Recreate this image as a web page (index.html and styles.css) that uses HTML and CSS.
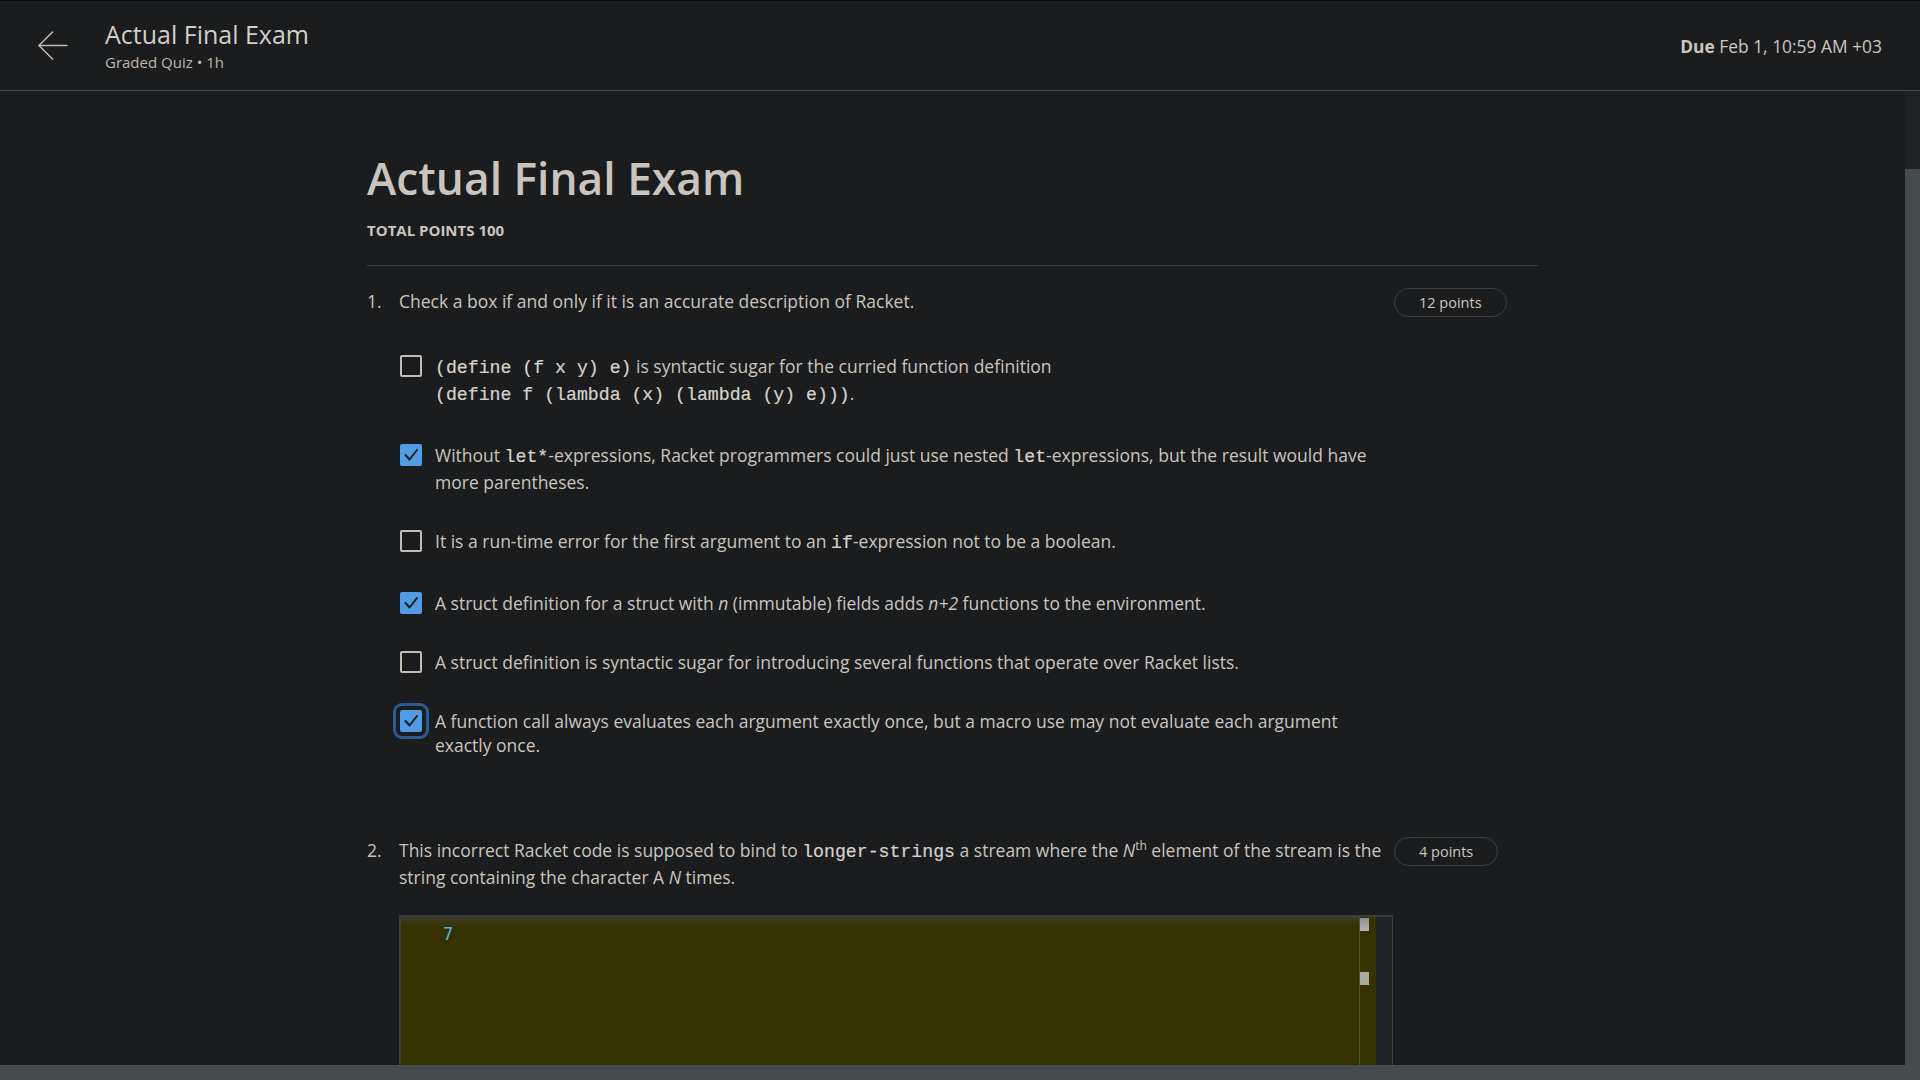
FILE: index.html
```html
<!DOCTYPE html>
<html lang="en">
<head>
<meta charset="utf-8">
<title>Actual Final Exam</title>
<link rel="stylesheet" href="styles.css">
</head>
<body>
<div class="app">
  <header class="topbar">
    <a class="back" href="#" aria-label="Back">
      <svg width="30" height="30" viewBox="0 0 30 30" fill="none" stroke="#bdb8b1" stroke-width="1.6" stroke-linecap="round" stroke-linejoin="round">
        <path d="M1 14.5 H29"/>
        <path d="M14.5 1 L1 14.5 L14.5 28"/>
      </svg>
    </a>
    <div class="titles">
      <div class="top-title">Actual Final Exam</div>
      <div class="top-sub">Graded Quiz • 1h</div>
    </div>
    <div class="due"><b>Due</b> Feb 1, 10:59 AM +03</div>
  </header>

  <div class="viewport">
    <div class="scroller">
      <main class="page">
        <h1 class="exam-title">Actual Final Exam</h1>
        <div class="total">TOTAL POINTS 100</div>
        <div class="divider"></div>

        <section class="question">
          <div class="qnum">1.</div>
          <div class="qbody">
            <p class="prompt">Check a box if and only if it is an accurate description of Racket.</p>
            <ul class="options">
              <li class="option">
                <span class="box"></span>
                <span class="otext"><code>(define (f x y) e)</code> is syntactic sugar for the curried function definition <code>(define f (lambda (x) (lambda (y) e)))</code>.</span>
              </li>
              <li class="option">
                <span class="box checked"><svg viewBox="0 0 22 22" width="22" height="22"><path d="M5.5 11 L9.5 15.5 L17 6" fill="none" stroke="#1a1c1e" stroke-width="2" stroke-linecap="round" stroke-linejoin="round"/></svg></span>
                <span class="otext">Without <code>let*</code>-expressions, Racket programmers could just use nested <code>let</code>-expressions, but the result would have more parentheses.</span>
              </li>
              <li class="option">
                <span class="box"></span>
                <span class="otext">It is a run-time error for the first argument to an <code>if</code>-expression not to be a boolean.</span>
              </li>
              <li class="option">
                <span class="box checked"><svg viewBox="0 0 22 22" width="22" height="22"><path d="M5.5 11 L9.5 15.5 L17 6" fill="none" stroke="#1a1c1e" stroke-width="2" stroke-linecap="round" stroke-linejoin="round"/></svg></span>
                <span class="otext">A struct definition for a struct with <i>n</i> (immutable) fields adds <i>n+2</i> functions to the environment.</span>
              </li>
              <li class="option">
                <span class="box"></span>
                <span class="otext">A struct definition is syntactic sugar for introducing several functions that operate over Racket lists.</span>
              </li>
              <li class="option">
                <span class="box checked focused"><svg viewBox="0 0 22 22" width="22" height="22"><path d="M5.5 11 L9.5 15.5 L17 6" fill="none" stroke="#1a1c1e" stroke-width="2" stroke-linecap="round" stroke-linejoin="round"/></svg></span>
                <span class="otext">A function call always evaluates each argument exactly once, but a macro use may not evaluate each argument exactly once.</span>
              </li>
            </ul>
          </div>
          <div class="qaside"><span class="pill">12 points</span></div>
        </section>

        <section class="question q2">
          <div class="qnum">2.</div>
          <div class="qbody">
            <p class="prompt">This incorrect Racket code is supposed to bind to <code>longer-strings</code> a stream where the <i>N</i><sup>th</sup> element of the stream is the string containing the character A <i>N</i> times.</p>
            <div class="editor">
              <div class="code-area">
                <span class="lineno">7</span>
              </div>
              <div class="ruler">
                <span class="mark mark-top"></span>
                <span class="mark mark-mid"></span>
              </div>
              <div class="editor-side"></div>
            </div>
          </div>
          <div class="qaside"><span class="pill">4 points</span></div>
        </section>
      </main>
    </div>
    <div class="vbar"><div class="vthumb"></div></div>
  </div>
  <div class="hbar"></div>
</div>
</body>
</html>
```

FILE: styles.css
```css
* { box-sizing: border-box; }

html, body {
  margin: 0;
  padding: 0;
  height: 100%;
  background: #1b1c1e;
  color: #c9c5be;
  font-family: "Open Sans", "Noto Sans", sans-serif;
}

.app {
  height: 100vh;
  display: flex;
  flex-direction: column;
  overflow: hidden;
}

/* ---------- top bar ---------- */
.topbar {
  height: 91px;
  flex: 0 0 91px;
  border-top: 1px solid #0c0c0d;
  border-bottom: 1px solid #47494b;
  display: flex;
  align-items: center;
  padding: 0 38px 0 38px;
  background: #1b1c1e;
}

.back {
  display: flex;
  width: 30px;
  height: 30px;
  margin-top: 1px;
}

.titles {
  margin-left: 37px;
  display: flex;
  flex-direction: column;
  margin-top: -2px;
}

.top-title {
  font-size: 25px;
  line-height: 30px;
  color: #d2cec8;
  margin-top: 1px;
}

.top-sub {
  font-size: 15px;
  line-height: 20px;
  color: #bcb7af;
  margin-top: 3px;
}

.due {
  margin-left: auto;
  font-size: 17.4px;
  color: #cbc7c0;
  margin-top: 1px;
}
.due b { font-weight: 700; }

/* ---------- scroll area ---------- */
.viewport {
  flex: 1;
  display: flex;
  min-height: 0;
}

.scroller {
  flex: 1;
  overflow: hidden;
}

.vbar {
  width: 15px;
  flex: 0 0 15px;
  background: #454a4d;
}
.vthumb {
  height: 78px;
  background: #1f2224;
}

.hbar {
  height: 15px;
  flex: 0 0 15px;
  background: #464b4e;
}

/* ---------- page ---------- */
.page {
  width: 1171px;
  margin: 0 auto;
  padding-top: 59px;
}

.exam-title {
  margin: 0;
  font-size: 44.3px;
  line-height: 56px;
  font-weight: 600;
  color: #c9c5be;
}

.total {
  margin-top: 14px;
  font-size: 15px;
  line-height: 20px;
  font-weight: 700;
  color: #c9c5be;
}

.divider {
  margin-top: 25px;
  height: 1px;
  background: #3a3c3f;
}

.question {
  display: flex;
  align-items: flex-start;
  padding-top: 23px;
}

.q2 { padding-top: 81px; }

.qnum {
  width: 32px;
  flex: 0 0 32px;
  font-size: 17.5px;
  line-height: 24px;
}

.qbody {
  flex: 0 0 993px;
  width: 993px;
}

.prompt {
  margin: 0;
  font-size: 17.5px;
  line-height: 24px;
}

.qaside {
  flex: 1;
  padding-left: 2px;
}

.pill {
  display: inline-block;
  margin-top: -1px;
  height: 29px;
  line-height: 27px;
  padding: 0 24px;
  border: 1px solid #3c3f42;
  border-radius: 15px;
  font-size: 14.5px;
  color: #c9c5be;
  white-space: nowrap;
}

code {
  font-family: "Liberation Mono", "DejaVu Sans Mono", monospace;
  font-size: 18.2px;
  line-height: 26px;
  font-weight: 400;
  color: #d6d2cb;
  white-space: nowrap;
  -webkit-text-stroke: 0.2px #d6d2cb;
}

sup {
  font-size: 12px;
  line-height: 0;
}

/* ---------- options ---------- */
.options {
  list-style: none;
  margin: 41px 0 0 0;
  padding: 0;
  display: flex;
  flex-direction: column;
  gap: 35px;
}

.option {
  display: flex;
  align-items: flex-start;
  gap: 13px;
  padding-left: 1px;
}

.box {
  width: 22px;
  height: 22px;
  flex: 0 0 22px;
  margin-top: 1px;
  border: 2px solid #c2bdb5;
  border-radius: 2px;
  display: flex;
  align-items: center;
  justify-content: center;
}

.box.checked {
  background: #519ce2;
  border-color: #519ce2;
}
.box.checked svg { display: block; margin: -2px; }

.box.focused {
  outline: 3px solid #2d5b91;
  outline-offset: 4px;
}

.otext {
  flex: 1;
  font-size: 17.5px;
  line-height: 24px;
  max-width: 955px;
}

/* ---------- editor ---------- */
.editor {
  margin-top: 26px;
  margin-right: -1px;
  height: 320px;
  border: 2px solid #393d41;
  border-right-width: 1px;
  border-bottom: none;
  display: flex;
  background: #353200;
}

.code-area {
  flex: 1;
  padding: 6px 0 0 42px;
  background: linear-gradient(#3d3c26 0, #353200 10px);
}

.lineno {
  font-family: "DejaVu Sans Mono", "Liberation Mono", monospace;
  font-size: 17px;
  line-height: 20px;
  color: #52b4d8;
}

.ruler {
  width: 17px;
  flex: 0 0 17px;
  border-left: 1px solid #575425;
  background: #353200;
  display: flex;
  flex-direction: column;
  padding-top: 1px;
}

.mark {
  display: block;
  width: 9px;
  height: 13px;
  background: #a8a8a6;
}
.mark-top { background: linear-gradient(#8d8d8a, #b4b4b2); }
.mark-mid { margin-top: 41px; }

.editor-side {
  width: 16px;
  flex: 0 0 16px;
  background: #212427;
}
```
